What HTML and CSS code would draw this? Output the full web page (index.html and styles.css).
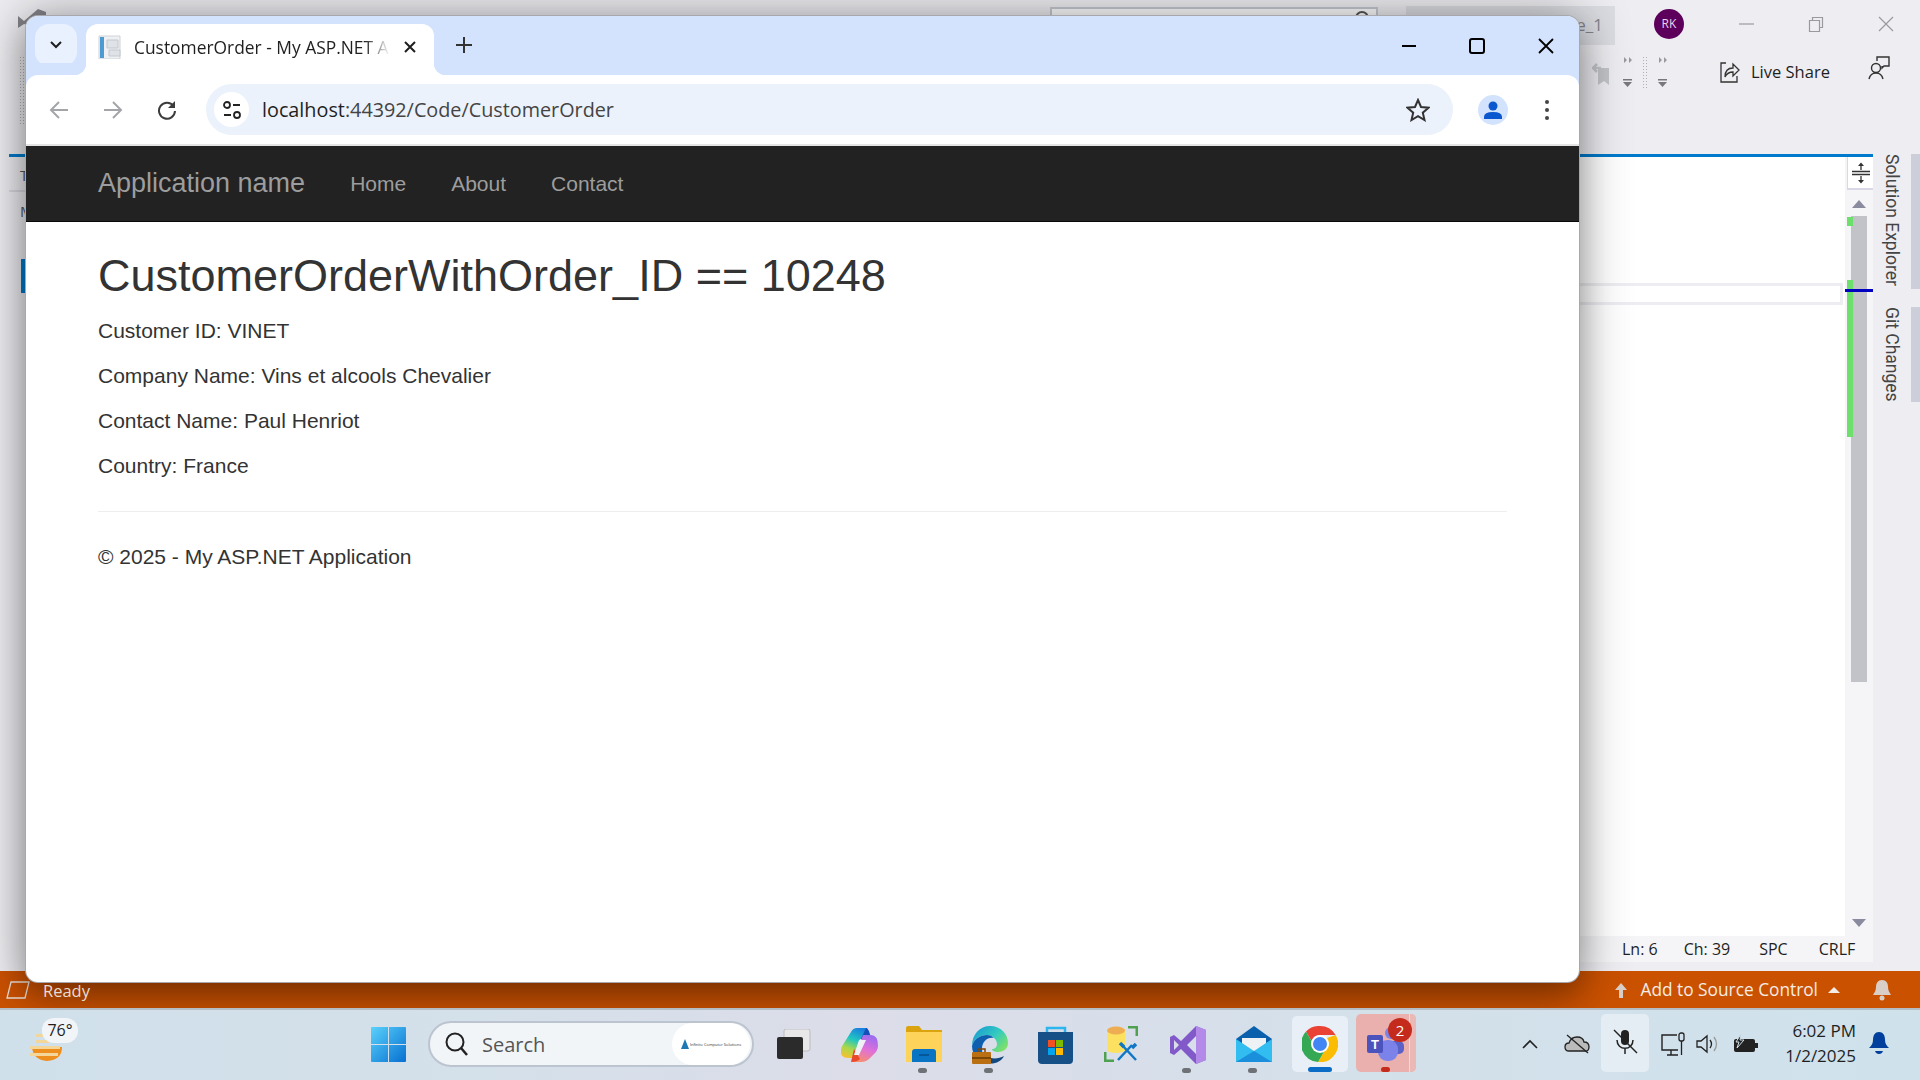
FILE: index.html
```html
<!DOCTYPE html>
<html lang="en">

<head>
    <meta charset="UTF-8">
    <title>CustomerOrder</title>
    <link rel="stylesheet" href="styles.css">
</head>

<body>
    <div class="desktop">
        <!-- visual studio behind the browser -->
        <div class="vs">
            <div class="vs-title">
                <svg class="vs-logo" width="32" height="26" viewBox="0 0 32 26"><path d="M2 8l6 5 14-12 8 3v12l-8 4-14-4-6 4z" fill="#85858a"/></svg>
                <div class="vs-search"><svg width="16" height="16" viewBox="0 0 16 16"><circle cx="8" cy="8" r="6" fill="none" stroke="#555" stroke-width="2"/></svg></div>
                <div class="vs-file">e_1</div>
                <div class="vs-avatar">RK</div>
                <svg class="vs-min" width="16" height="16" viewBox="0 0 16 16"><path d="M0 8h15" stroke="#9a9a9e" stroke-width="1.2"/></svg>
                <svg class="vs-max" width="16" height="16" viewBox="0 0 16 16"><path d="M1.500 4.500h10v11h-10zM4.500 4V1.500h10v10H12" fill="none" stroke="#9a9a9e" stroke-width="1.200"/></svg>
                <svg class="vs-close" width="16" height="16" viewBox="0 0 16 16"><path d="M1 1l14 14M15 1L1 15" stroke="#9a9a9e" stroke-width="1.200"/></svg>
            </div>
            <div class="vs-tools">
                <div class="vs-dots"></div>
                <svg class="vs-bookmark" width="18" height="24" viewBox="0 0 18 24"><path d="M6 6h11v17l-5-4-6 4z" fill="#c4c5c9"/><path d="M9 6H2m3-4L1 6l4 4" fill="none" stroke="#c4c5c9" stroke-width="2.500"/></svg>
                <div class="vs-grip">
                    <svg width="10" height="32" viewBox="0 0 10 32"><path d="M1 1l3 3-3 3zM6 1l3 3-3 3z" fill="#9a9a9e"/><path d="M0 23h9v1.500H0zM0 26h9l-4.500 5z" fill="#77777c"/></svg>
                    <div class="grip-line"></div>
                    <svg width="10" height="32" viewBox="0 0 10 32"><path d="M1 1l3 3-3 3zM6 1l3 3-3 3z" fill="#9a9a9e"/><path d="M0 23h9v1.500H0zM0 26h9l-4.500 5z" fill="#77777c"/></svg>
                </div>
                <svg class="vs-share" width="20" height="22" viewBox="0 0 20 22"><path d="M6 2H1v19h16v-6" fill="none" stroke="#333" stroke-width="1.300"/><path d="M5 16c0-6 3-9 8-9V3l6 6-6 6v-4c-4 0-6 1-8 5z" fill="none" stroke="#333" stroke-width="1.300"/></svg>
                <div class="vs-share-text">Live Share</div>
                <svg class="vs-feedback" width="22" height="24" viewBox="0 0 22 24"><circle cx="8" cy="12" r="4.500" fill="none" stroke="#333" stroke-width="1.400"/><path d="M1 23c1-4 3-6 7-6s6 2 7 6" fill="none" stroke="#333" stroke-width="1.400"/><path d="M9 5V1h12v9h-5l-2 2v-2" fill="none" stroke="#333" stroke-width="1.400"/></svg>
            </div>
            <div class="vs-main">
                <div class="vs-left">
                    <div class="left-blue"></div>
                    <div class="left-t">T</div>
                    <div class="left-line"></div>
                    <div class="left-m">M</div>
                    <div class="left-tab"></div>
                </div>
                <div class="vs-center">
                    <div class="vs-editor">
                        <div class="editor-body"><div class="cur-line"></div></div>
                        <div class="vs-scroll">
                            <div class="split-btn">
                                <svg width="18" height="22" viewBox="0 0 18 22"><path d="M0 9.500h18M0 12.500h18" stroke="#333" stroke-width="1.500"/><path d="M9 8V2M9 14v6" stroke="#333" stroke-width="1.300"/><path d="M6 4l3-3.500L12 4zM6 18l3 3.500 3-3.500z" fill="#333"/></svg>
                            </div>
                            <div class="arrow-up"></div>
                            <div class="scroll-track">
                                <div class="thumb"></div>
                                <div class="mark mark-a"></div>
                                <div class="mark mark-b"></div>
                                <div class="mark-line"></div>
                            </div>
                            <div class="arrow-down"></div>
                        </div>
                    </div>
                    <div class="editor-status">
                        <span class="st-ln">Ln: 6</span>
                        <span class="st-ch">Ch: 39</span>
                        <span class="st-spc">SPC</span>
                        <span class="st-crlf">CRLF</span>
                    </div>
                </div>
                <div class="vs-side">
                    <div class="side-item side-a"><span>Solution Explorer</span></div>
                    <div class="side-item side-b"><span>Git Changes</span></div>
                </div>
            </div>
            <div class="vs-status">
                <svg class="st-icon" width="24" height="18" viewBox="0 0 24 18"><path d="M5 1h18l-4 16H1z" fill="none" stroke="#eadfd6" stroke-width="1.300"/></svg>
                <span class="st-ready">Ready</span>
                <svg class="st-up" width="14" height="16" viewBox="0 0 14 16"><path d="M7 1l6 7H9v8H5V8H1z" fill="#d9cfc8"/></svg>
                <span class="st-add">Add to Source Control</span>
                <div class="st-caret"></div>
                <svg class="st-bell" width="20" height="22" viewBox="0 0 20 22"><path d="M10 1c4 0 6 3 6 7 0 4 2 6 3 8H1c1-2 3-4 3-8 0-4 2-7 6-7z" fill="#d9cfc8"/><circle cx="10" cy="19" r="2.500" fill="#d9cfc8"/></svg>
            </div>
        </div>

        <!-- windows taskbar -->
        <div class="taskbar">
            <div class="weather">
                <svg width="38" height="42" viewBox="0 0 38 42"><path d="M4 20h30q0 13-15 14Q5 33 4 20z" fill="#ee8f1d"/><path d="M8 7h8v3H8zM8 13h14v3H8zM2 19h30v3H2zM2 26h28v3H2z" fill="#f3d79a"/></svg>
                <div class="temp">76°</div>
            </div>
            <svg class="start" width="35" height="35" viewBox="0 0 35 35"><defs><linearGradient id="win" x1="0" y1="0" x2="1" y2="1"><stop offset="0" stop-color="#5bd1fb"/><stop offset="1" stop-color="#0670d1"/></linearGradient></defs><path d="M0 1q0-1 1-1h16v17H0zM18 0h16q1 0 1 1v16H18zM0 18h17v17H1q-1 0-1-1zM18 18h17v16q0 1-1 1H18z" fill="url(#win)"/></svg>
            <div class="search">
                <svg width="24" height="26" viewBox="0 0 24 26"><circle cx="11" cy="11" r="8.500" fill="none" stroke="#222" stroke-width="2"/><path d="M17 17l6 7" stroke="#222" stroke-width="2.500"/></svg>
                <span class="search-text">Search</span>
                <div class="search-logo">
                    <svg width="8" height="10" viewBox="0 0 8 10"><path d="M4 0l4 10H0z" fill="#1e78b4"/></svg>
                    <span>Infinite Computer Solutions</span>
                </div>
            </div>
            <div class="app app-taskview">
                <svg width="36" height="30" viewBox="0 0 36 30"><rect x="7" y="0" width="26" height="22" rx="2" fill="#e8e8e8" stroke="#bbb"/><rect x="0" y="8" width="26" height="22" rx="2" fill="#2b2b2b"/></svg>
            </div>
            <div class="app app-copilot">
                <svg width="38" height="34" viewBox="0 0 38 34"><defs><linearGradient id="copl" x1=".6" y1="0" x2=".2" y2="1"><stop offset="0" stop-color="#1a7fe0"/><stop offset=".4" stop-color="#22c8c0"/><stop offset=".7" stop-color="#a8d84a"/><stop offset="1" stop-color="#f8c030"/></linearGradient><linearGradient id="copr" x1=".7" y1="0" x2=".3" y2="1"><stop offset="0" stop-color="#9a6cf0"/><stop offset=".5" stop-color="#e070d8"/><stop offset="1" stop-color="#f8906a"/></linearGradient></defs><path d="M17 0h10l4 11H20l-7 19H8Q0 30 1 22q0-3 3-7l7-11q2-4 6-4z" fill="url(#copl)"/><path d="M26 0q3 0 5 11H21z" fill="#1550b8"/><path d="M21 34H11q3-1 4-4l8-23 7 0h1q7 0 7 11 0 3-2 6l-7 7q-3 3-8 3z" fill="url(#copr)"/><path d="M11 34l3-13 6 10q-3 3-9 3z" fill="#e8482c"/><path d="M19 12h7l-7 15h-5z" fill="#eef0f6"/></svg>
            </div>
            <div class="app app-folder">
                <svg width="36" height="36" viewBox="0 0 36 36"><path d="M0 2q0-2 2-2h11l3 4h20v32H0z" fill="#dba40f"/><path d="M0 6h36v30H0z" fill="#fdd35a"/><path d="M6 26q0-3 3-3h18q3 0 3 3v10H6z" fill="#0a74c4"/><path d="M13 29h10" stroke="#064e88" stroke-width="1.500"/></svg>
                <i class="dot"></i>
            </div>
            <div class="app app-edge">
                <svg width="36" height="38" viewBox="0 0 36 38"><defs><linearGradient id="edg" x1="0" y1="0" x2="1" y2=".7"><stop offset="0" stop-color="#1593d4"/><stop offset=".6" stop-color="#33cbc0"/><stop offset="1" stop-color="#7ce06a"/></linearGradient></defs><path d="M18 0c11 0 18 8 18 17 0 6-5 9-10 9-3 0-6-1-6-3 3 0 5-2 5-5 0-5-5-9-10-9C8 9 2 13 0 20 0 8 8 0 18 0z" fill="url(#edg)"/><path d="M0 20c2-7 8-11 15-11 3 0 5 1 7 3-7-1-12 4-12 11 0 6 4 12 12 14C10 38 0 31 0 20z" fill="#0e5fb0"/><path d="M14 37c8 2 15-1 18-7-5 3-12 3-17 1z" fill="#14497f"/><rect x="0" y="26" width="19" height="12" rx="1" fill="#b96f12"/><path d="M0 31h19v2H0z" fill="#7b4708"/><path d="M6 26v-3h7v3" fill="none" stroke="#7b4708" stroke-width="1.500"/></svg>
                <i class="dot"></i>
            </div>
            <div class="app app-store">
                <svg width="36" height="38" viewBox="0 0 36 38"><path d="M9 7V2h18v5" fill="none" stroke="#2cb5ef" stroke-width="2.500"/><path d="M0 6h35v28q0 4-4 4H4q-4 0-4-4z" fill="#174f87"/><rect x="10" y="14" width="7" height="7" fill="#f25022"/><rect x="18" y="14" width="7" height="7" fill="#7fba00"/><rect x="10" y="22" width="7" height="7" fill="#00a4ef"/><rect x="18" y="22" width="7" height="7" fill="#ffb900"/></svg>
            </div>
            <div class="app app-sql">
                <svg width="34" height="36" viewBox="0 0 34 36"><path d="M3 3h18v22q-9 4-18 0z" fill="#fbe15f"/><ellipse cx="12" cy="4.500" rx="9" ry="4" fill="#eead53"/><path d="M24 1h9v9M1 26v9h9" fill="none" stroke="#4fa14f" stroke-width="3"/><path d="M14 34l14-15M32 34L18 19" stroke="#1177c4" stroke-width="2.500"/><path d="M16 17l4 4M32 18l-4 4" stroke="#1177c4" stroke-width="3.500"/></svg>
            </div>
            <div class="app app-vstudio">
                <svg width="36" height="38" viewBox="0 0 36 38"><path d="M26 0l10 4v30l-10 4L11 23l-7 6-4-2V11l4-2 7 6zM26 10l-9 9 9 9zM4 14v10l5-5z" fill="#8259c9"/><path d="M26 0l10 4v30l-10 4z" fill="#b48ae8"/></svg>
                <i class="dot"></i>
            </div>
            <div class="app app-mail">
                <svg width="36" height="36" viewBox="0 0 36 36"><path d="M0 13L18 0l18 13v23H0z" fill="#0a60ad"/><path d="M6 12h24v6l-12 8-12-8z" fill="#eef2f5"/><path d="M0 13l18 12 18-12v23H0z" fill="#31bdf0"/><path d="M0 36l18-11 18 11z" fill="#1a8fdc"/></svg>
                <i class="dot"></i>
            </div>
            <div class="app app-chrome">
                <svg width="36" height="36" viewBox="0 0 36 36"><path d="M18 0a18 18 0 0 1 15.600 9H18a9 9 0 0 0-8.500 6L4 5.500A18 18 0 0 1 18 0z" fill="#ea4335"/><path d="M33.600 9A18 18 0 0 1 16 36l7.500-13A9 9 0 0 0 25 12z" fill="#fbbc04"/><path d="M4 5.500l8.500 15A9 9 0 0 0 23.500 23L16 36A18 18 0 0 1 4 5.500z" fill="#34a853"/><circle cx="18" cy="18" r="9" fill="#fff"/><circle cx="18" cy="18" r="7" fill="#4285f4"/></svg>
                <i class="bar"></i>
            </div>
            <div class="app app-teams">
                <svg width="38" height="34" viewBox="0 0 38 34"><circle cx="24" cy="6" r="6" fill="#7b83eb"/><circle cx="33" cy="9" r="4" fill="#5a62c8"/><rect x="22" y="14" width="15" height="13" rx="5" fill="#5a62c8"/><rect x="11" y="13" width="20" height="21" rx="9" fill="#7b83eb"/><rect x="0" y="8" width="16" height="18" rx="2" fill="#4b53bc"/><text x="8" y="22" class="teams-t">T</text></svg>
                <div class="teams-badge">2</div>
                <i class="red"></i>
            </div>
            <div class="tray">
                <svg class="tr-chev" width="16" height="10" viewBox="0 0 16 10"><path d="M1 9l7-7 7 7" fill="none" stroke="#222" stroke-width="1.600"/></svg>
                <svg class="tr-cloud" width="26" height="20" viewBox="0 0 26 20"><path d="M5 17q-4 0-4-4t4-4q2-6 8-6t7 5q5 0 5 5t-5 4z" fill="#bbb" stroke="#222" stroke-width="1.300"/><path d="M3 1l21 18" stroke="#222" stroke-width="1.300"/></svg>
                <div class="tr-mic">
                    <svg width="26" height="26" viewBox="0 0 26 26"><rect x="9" y="1" width="8" height="15" rx="4" fill="#222"/><path d="M5 11c0 11 16 11 16 0M13 19v6" fill="none" stroke="#222" stroke-width="1.500"/><path d="M2 1l23 23" stroke="#222" stroke-width="1.500"/></svg>
                </div>
                <svg class="tr-net" width="24" height="24" viewBox="0 0 24 24"><path d="M16 3H1v15h16M6 23h11M10 18v5" fill="none" stroke="#222" stroke-width="1.400"/><rect x="18" y="1" width="5" height="8" rx="2" fill="none" stroke="#222" stroke-width="1.300"/><path d="M20.500 9v14" stroke="#222" stroke-width="1.300"/></svg>
                <svg class="tr-vol" width="24" height="20" viewBox="0 0 24 20"><path d="M1 7h4l6-5v16l-6-5H1z" fill="none" stroke="#222" stroke-width="1.300"/><path d="M14 6q3 4 0 8" fill="none" stroke="#222" stroke-width="1.300"/><path d="M18 3q5 7 0 14" fill="none" stroke="#999" stroke-width="1.300"/></svg>
                <svg class="tr-bat" width="26" height="20" viewBox="0 0 26 20"><rect x="1" y="5" width="21" height="13" rx="2" fill="#222"/><rect x="22" y="9" width="3" height="5" fill="#222"/><path d="M8 0L3 8h3l-2 6 7-8H7z" fill="#222" stroke="#d0e0ea"/></svg>
                <div class="clock"><span>6:02 PM</span><span>1/2/2025</span></div>
                <svg class="tr-bell" width="20" height="24" viewBox="0 0 20 24"><path d="M10 1c4 0 6 3 6 8 0 4 2 6 4 8H0c2-2 4-4 4-8 0-5 2-8 6-8z" fill="#003f9b"/><path d="M6 20h8q-1 3-4 3t-4-3z" fill="#003f9b"/></svg>
            </div>
        </div>

        <!-- the browser window -->
        <div class="browser">
            <div class="tabstrip">
                <div class="tab-search">
                    <svg width="12" height="8" viewBox="0 0 12 8"><path d="M1 1l5 5 5-5" fill="none" stroke="#1f1f1f" stroke-width="2"/></svg>
                </div>
                <div class="tab">
                    <svg class="favicon" width="24" height="24" viewBox="0 0 24 24"><path d="M1 1h21v23H1z" fill="#eef0f3" stroke="#cfd3d8"/><path d="M2 2h4v21H2z" fill="#4d9bd1"/><path d="M9 5h11v8H9zM11 15h11v6H11z" fill="#dfe3e8" stroke="#c3c8ce"/></svg>
                    <span class="tab-title">CustomerOrder - My ASP.NET A</span>
                    <svg class="tab-close" width="12" height="12" viewBox="0 0 12 12"><path d="M1 1l10 10M11 1L1 11" stroke="#1f1f1f" stroke-width="2"/></svg>
                </div>
                <svg class="tab-new" width="16" height="16" viewBox="0 0 16 16"><path d="M8 0v16M0 8h16" stroke="#333" stroke-width="2"/></svg>
                <svg class="win-min" width="16" height="16" viewBox="0 0 16 16"><path d="M1 8h14" stroke="#000" stroke-width="2"/></svg>
                <svg class="win-max" width="16" height="16" viewBox="0 0 16 16"><rect x="1" y="1" width="14" height="14" rx="2" fill="none" stroke="#000" stroke-width="2"/></svg>
                <svg class="win-close" width="16" height="16" viewBox="0 0 16 16"><path d="M1 1l14 14M15 1L1 15" stroke="#000" stroke-width="1.800"/></svg>
            </div>
            <div class="toolbar">
                <svg class="tb-back" width="20" height="20" viewBox="0 0 20 20"><path d="M19 10H2m8-8l-8 8 8 8" fill="none" stroke="#a3a5a8" stroke-width="2"/></svg>
                <svg class="tb-forward" width="20" height="20" viewBox="0 0 20 20"><path d="M1 10h17m-8-8l8 8-8 8" fill="none" stroke="#a3a5a8" stroke-width="2"/></svg>
                <svg class="tb-reload" width="20" height="20" viewBox="0 0 20 20"><path d="M16.500 6A8 8 0 1 0 18 11" fill="none" stroke="#3c3c3c" stroke-width="2"/><path d="M18 1v7h-7z" fill="#3c3c3c"/></svg>
                <div class="omnibox">
                    <div class="site-icon">
                        <svg width="18" height="20" viewBox="0 0 18 20"><circle cx="4" cy="5" r="3" fill="none" stroke="#222" stroke-width="1.800"/><path d="M10 5h7M1 15h7" stroke="#222" stroke-width="1.800"/><circle cx="14" cy="15" r="3" fill="none" stroke="#222" stroke-width="1.800"/></svg>
                    </div>
                    <span class="url">localhost<span class="url-rest">:44392/Code/CustomerOrder</span></span>
                    <svg class="star" width="24" height="24" viewBox="0 0 24 24"><path d="M12 2l3 7 7.500.7-5.700 5 1.700 7.300-6.500-3.900L5.500 22l1.700-7.300-5.700-5L9 9z" fill="none" stroke="#333" stroke-width="2"/></svg>
                </div>
                <div class="profile">
                    <svg width="20" height="20" viewBox="0 0 20 20"><circle cx="10" cy="6" r="4.500" fill="#0b57d0"/><path d="M1 19v-2q0-5 9-5t9 5v2z" fill="#0b57d0"/></svg>
                </div>
                <div class="kebab"><i></i><i></i><i></i></div>
            </div>
            <div class="page">
                <nav class="navbar">
                    <a class="brand">Application name</a>
                    <a class="nav-link link-home">Home</a>
                    <a class="nav-link link-about">About</a>
                    <a class="nav-link link-contact">Contact</a>
                </nav>
                <div class="container">
                    <h2>CustomerOrderWithOrder_ID == 10248</h2>
                    <p>Customer ID: VINET</p>
                    <p>Company Name: Vins et alcools Chevalier</p>
                    <p>Contact Name: Paul Henriot</p>
                    <p>Country: France</p>
                    <hr>
                    <footer>© 2025 - My ASP.NET Application</footer>
                </div>
            </div>
        </div>
    </div>
</body>

</html>
```

FILE: styles.css
```css
* {
    padding: 0;
    margin: 0;
    box-sizing: border-box;
}

html,
body {
    width: 1920px;
    height: 1080px;
    overflow: hidden;
}

body {
    font-family: "Open Sans", "Liberation Sans", sans-serif;
    color: #1f1f1f;
}

svg {
    display: block;
    flex: none;
}

.desktop {
    position: relative;
    width: 1920px;
    height: 1080px;
    display: flex;
    flex-direction: column;
    overflow: hidden;
}

/* visual studio */
.vs {
    height: 1008px;
    background-color: #eeeef2;
    display: flex;
    flex-direction: column;
}

.vs-title {
    height: 48px;
    display: flex;
    align-items: flex-start;
}

.vs-logo {
    margin: 8px 0 0 16px;
}

.vs-search {
    width: 328px;
    height: 38px;
    margin: 7px 0 0 1002px;
    border: 2px solid #c8cad3;
    background-color: #fff;
    padding: 1px 0 0 302px;
}

.vs-file {
    width: 209px;
    height: 39px;
    margin: 6px 0 0 28px;
    padding: 7px 12px 0 0;
    background-color: #dcdde2;
    color: #85868c;
    font-size: 17px;
    text-align: right;
}

.vs-avatar {
    width: 30px;
    height: 30px;
    margin: 9px 0 0 39px;
    border-radius: 50%;
    background-color: #5c005c;
    color: #e8d4e8;
    font-size: 12px;
    line-height: 30px;
    text-align: center;
}

.vs-min {
    margin: 16px 0 0 55px;
}

.vs-max {
    margin: 16px 0 0 53px;
}

.vs-close {
    margin: 16px 0 0 54px;
}

.vs-tools {
    height: 106px;
    display: flex;
    align-items: flex-start;
    padding-top: 8px;
}

.vs-dots {
    width: 5px;
    height: 70px;
    margin-left: 19px;
    background-image: radial-gradient(#b0b0b5 1px, transparent 1px);
    background-size: 3px 3px;
}

.vs-bookmark {
    margin: 6px 0 0 1568px;
}

.vs-grip {
    display: flex;
    gap: 9px;
    margin-left: 13px;
    height: 32px;
}

.grip-line {
    width: 7px;
    height: 32px;
    background-image: radial-gradient(#b0b0b5 1px, transparent 1px);
    background-size: 3px 3px;
}

.vs-share {
    margin: 5px 0 0 52px;
}

.vs-share-text {
    margin: 3px 0 0 11px;
    font-size: 16.500px;
    line-height: 26px;
    color: #1f1f1f;
}

.vs-feedback {
    margin: 0 0 0 38px;
}

.vs-main {
    flex: 1;
    display: flex;
    min-height: 0;
    padding-bottom: 9px;
}

.vs-left {
    width: 26px;
    flex: none;
}

.left-blue {
    height: 3px;
    margin-left: 9px;
    background-color: #007acc;
}

.left-t,
.left-m {
    padding-left: 20px;
    font-size: 15px;
    color: #555;
    line-height: 20px;
}

.left-t {
    margin-top: 8px;
}

.left-line {
    height: 2px;
    margin: 5px 0 0 9px;
    background-color: #d8d8e0;
}

.left-m {
    margin-top: 9px;
}

.left-tab {
    width: 5px;
    height: 34px;
    margin: 38px 0 0 21px;
    background-color: #007acc;
}

.vs-center {
    flex: 1;
    display: flex;
    flex-direction: column;
}

.vs-editor {
    flex: 1;
    display: flex;
    border-top: 3px solid #007acc;
    min-height: 0;
}

.editor-body {
    flex: 1;
    background-color: #fff;
    padding: 126px 0 0 1553px;
}

.cur-line {
    height: 22px;
    width: 264px;
    border: 3px solid #eeeef2;
    border-left: 0;
}

.editor-status {
    height: 26px;
    flex: none;
    background-color: #f5f5f7;
    display: flex;
    font-size: 16px;
    line-height: 26px;
    color: #1f1f1f;
    white-space: nowrap;
}

.st-ln {
    margin-left: 1596px;
}

.st-ch {
    margin-left: 26px;
}

.st-spc {
    margin-left: 29px;
}

.st-crlf {
    margin-left: 31px;
}

.vs-scroll {
    width: 28px;
    flex: none;
    background-color: #f5f5f7;
    display: flex;
    flex-direction: column;
}

.split-btn {
    height: 33px;
    flex: none;
    margin-left: 2px;
    background-color: #fff;
    border-bottom: 2px solid #d8d8e6;
    border-left: 1px solid #d8d8e6;
    padding: 5px 0 0 4px;
}

.arrow-up {
    width: 0;
    height: 0;
    flex: none;
    margin: 10px 0 0 7px;
    border-left: 7px solid transparent;
    border-right: 7px solid transparent;
    border-bottom: 8px solid #8a8b9e;
}

.scroll-track {
    position: relative;
    flex: 1;
    margin-top: 8px;
}

.thumb {
    width: 16px;
    height: 466px;
    margin-left: 6px;
    background-color: #c2c3c9;
}

.mark {
    position: absolute;
    left: 2px;
    width: 6px;
    background-color: #6cdf6c;
}

.mark-a {
    top: 1px;
    height: 9px;
}

.mark-b {
    top: 64px;
    height: 157px;
}

.mark-line {
    position: absolute;
    left: 0;
    top: 73px;
    width: 28px;
    height: 3px;
    background-color: #0000c0;
}

.arrow-down {
    width: 0;
    height: 0;
    flex: none;
    margin: 0 0 9px 7px;
    border-left: 7px solid transparent;
    border-right: 7px solid transparent;
    border-top: 8px solid #8a8b9e;
}

.vs-side {
    width: 47px;
    flex: none;
    display: flex;
    flex-direction: column;
    gap: 18px;
    align-items: flex-end;
}

.side-item {
    width: 47px;
    border-right: 9px solid #ccced9;
    writing-mode: vertical-rl;
    font-family: Roboto, sans-serif;
    font-size: 17.500px;
    line-height: 38px;
    white-space: nowrap;
    color: #444;
}

.side-a {
    height: 135px;
}

.side-b {
    height: 95px;
}

.vs-status {
    height: 37px;
    flex: none;
    background-color: #ca5100;
    color: #f4ece6;
    display: flex;
    align-items: center;
    font-size: 17.300px;
    padding-right: 28px;
}

.st-icon {
    margin-left: 6px;
}

.st-ready {
    margin-left: 13px;
    font-size: 16.500px;
    color: #e8dcd2;
    position: relative;
    z-index: 3;
    top: 1px;
}

.st-up {
    margin-left: auto;
}

.st-add {
    margin-left: 13px;
}

.st-caret {
    width: 0;
    height: 0;
    margin-left: 10px;
    border-left: 6px solid transparent;
    border-right: 6px solid transparent;
    border-bottom: 6px solid #f4ece6;
}

.st-bell {
    margin-left: 32px;
}

/* taskbar */
.taskbar {
    position: relative;
    z-index: 5;
    flex: 1;
    border-top: 2px solid #b4bcc4;
    background: linear-gradient(90deg, #d0e0ea 0%, #d4e0ea 25%, #dcdde9 45%, #d4e0ea 70%, #cfe2ec 100%);
    display: flex;
    align-items: flex-start;
}

.weather {
    position: relative;
    width: 38px;
    height: 42px;
    margin: 17px 0 0 28px;
}

.temp {
    position: absolute;
    left: 14px;
    top: -9px;
    width: 36px;
    height: 25px;
    border-radius: 12px;
    background-color: #f2f5f7;
    font-size: 16px;
    line-height: 25px;
    text-align: center;
}

.start {
    margin: 17px 0 0 305px;
}

.search {
    width: 326px;
    height: 46px;
    margin: 11px 0 0 22px;
    border: 2px solid #bcc4d0;
    border-radius: 23px;
    background-color: #f2f5f8;
    display: flex;
    align-items: center;
    padding: 0 2px 0 14px;
}

.search-text {
    margin-left: 14px;
    font-size: 20px;
    color: #555;
}

.search-logo {
    width: 78px;
    height: 42px;
    margin-left: auto;
    border-radius: 21px;
    background-color: #fff;
    display: flex;
    align-items: center;
    justify-content: center;
    gap: 1px;
    font-size: 4px;
    white-space: nowrap;
    color: #333;
}

.app {
    position: relative;
    width: 66px;
    height: 68px;
    padding: 16px 0 0 15px;
}

.app-taskview {
    margin-left: 9px;
    width: 62px;
    padding: 19px 0 0 14px;
}

.app-copilot {
    padding: 18px 0 0 15px;
}

.app-chrome {
    width: 56px;
    height: 56px;
    margin: 6px 0 0 0;
    padding: 10px 0 0 10px;
    background-color: #e8eff6;
    border-radius: 5px;
}

.app-mail {
    width: 71px;
}

.app-teams {
    width: 60px;
    height: 58px;
    margin: 4px 0 0 8px;
    padding: 13px 0 0 11px;
    background-color: #e9b0ad;
    border-radius: 5px;
    overflow: visible;
}

.app-teams::after {
    content: "";
    position: absolute;
    right: 0;
    top: 0;
    bottom: 0;
    width: 6px;
    border-left: 1px solid #f2d8d6;
    background-color: #eab8b5;
    border-radius: 0 5px 5px 0;
}

.teams-t {
    fill: #fff;
    font-family: "Liberation Sans", sans-serif;
    font-size: 13px;
    font-weight: bold;
    text-anchor: middle;
}

.teams-badge {
    position: absolute;
    right: 4px;
    top: 4px;
    width: 24px;
    height: 24px;
    border-radius: 50%;
    background-color: #c42b1c;
    color: #fff;
    font-size: 15px;
    line-height: 24px;
    text-align: center;
    z-index: 1;
}

.dot,
.red {
    position: absolute;
    left: 27px;
    top: 58px;
    width: 9px;
    height: 5px;
    border-radius: 3px;
    background-color: #6e7276;
}

.red {
    top: 53px;
    left: 25px;
    background-color: #c42b1c;
}

.bar {
    position: absolute;
    left: 16px;
    bottom: 0;
    width: 24px;
    height: 5px;
    border-radius: 3px;
    background-color: #0a6cc4;
}

.tray {
    flex: 1;
    display: flex;
    align-items: flex-start;
    padding-left: 1px;
}

.tr-chev {
    margin: 29px 0 0 105px;
}

.tr-cloud {
    margin: 24px 0 0 26px;
}

.tr-mic {
    width: 48px;
    height: 58px;
    margin: 4px 0 0 11px;
    padding: 15px 0 0 11px;
    background-color: #e4edf3;
    border-radius: 5px;
}

.tr-net {
    margin: 22px 0 0 12px;
}

.tr-vol {
    margin: 24px 0 0 11px;
}

.tr-bat {
    margin: 24px 0 0 13px;
}

.clock {
    width: 86px;
    margin: 8px 0 0 11px;
    display: flex;
    flex-direction: column;
    align-items: flex-end;
    font-size: 17px;
    line-height: 25px;
    color: #1f1f1f;
}

.tr-bell {
    margin: 21px 0 0 13px;
}

/* browser */
.browser {
    position: absolute;
    left: 26px;
    top: 16px;
    width: 1553px;
    height: 966px;
    border-radius: 12px;
    background-color: #fff;
    box-shadow: 0 0 0 1px #a8a8ac, 0 0 50px 4px rgba(0, 0, 0, .3), 0 14px 30px rgba(0, 0, 0, .25);
    display: flex;
    flex-direction: column;
    overflow: hidden;
    z-index: 2;
}

.tabstrip {
    height: 59px;
    flex: none;
    background-color: #d3e3fd;
    display: flex;
    align-items: flex-start;
    padding: 8px 0 0 9px;
}

.tab-search {
    width: 42px;
    height: 42px;
    flex: none;
    border-radius: 14px;
    background-color: #e9f1fe;
    display: flex;
    align-items: center;
    justify-content: center;
}

.tab {
    position: relative;
    width: 348px;
    height: 51px;
    flex: none;
    margin-left: 9px;
    border-radius: 12px 12px 0 0;
    background-color: #fff;
    display: flex;
    align-items: center;
    padding: 0 0 6px 12px;
}

.tab::before,
.tab::after {
    content: "";
    position: absolute;
    bottom: 0;
    width: 12px;
    height: 12px;
}

.tab::before {
    left: -12px;
    background: radial-gradient(circle at 0 0, transparent 12px, #fff 12.5px);
}

.tab::after {
    right: -12px;
    background: radial-gradient(circle at 100% 0, transparent 12px, #fff 12.5px);
}

.tab-title {
    width: 256px;
    margin-left: 12px;
    font-size: 17.400px;
    white-space: nowrap;
    -webkit-mask-image: linear-gradient(90deg, #000 90%, transparent);
    mask-image: linear-gradient(90deg, #000 90%, transparent);
}

.tab-close {
    margin-left: 14px;
}

.tab-new {
    margin: 13px 0 0 22px;
}

.win-min {
    margin: 14px 0 0 929px;
}

.win-max {
    margin: 14px 0 0 52px;
}

.win-close {
    margin: 14px 0 0 53px;
}

.toolbar {
    height: 71px;
    flex: none;
    background-color: #fff;
    border-bottom: 2px solid #e4e4e4;
    border-radius: 12px 12px 0 0;
    box-shadow: 0 -12px 0 0 #d3e3fd;
    display: flex;
    align-items: center;
}

.tb-back {
    margin-left: 23px;
}

.tb-forward {
    margin-left: 34px;
}

.tb-reload {
    margin-left: 34px;
}

.omnibox {
    width: 1247px;
    height: 51px;
    flex: none;
    margin-left: 29px;
    border-radius: 26px;
    background-color: #ecf2fb;
    display: flex;
    align-items: center;
    padding: 0 23px 0 8px;
}

.site-icon {
    width: 35px;
    height: 35px;
    flex: none;
    border-radius: 50%;
    background-color: #fff;
    display: flex;
    align-items: center;
    justify-content: center;
}

.url {
    margin-left: 13px;
    font-size: 19.800px;
    color: #1f1f1f;
}

.url-rest {
    color: #444;
}

.star {
    margin-left: auto;
}

.profile {
    width: 30px;
    height: 30px;
    flex: none;
    margin-left: 25px;
    border-radius: 50%;
    background-color: #d3e3fd;
    display: flex;
    align-items: center;
    justify-content: center;
}

.kebab {
    margin-left: 37px;
    display: flex;
    flex-direction: column;
    gap: 4px;
}

.kebab i {
    display: block;
    width: 4px;
    height: 4px;
    border-radius: 50%;
    background-color: #444;
}

.page {
    flex: 1;
    font-family: "Liberation Sans", Arial, sans-serif;
    color: #333;
}

.navbar {
    height: 76px;
    background-color: #222;
    border-bottom: 1px solid #080808;
    display: flex;
    align-items: center;
    padding-left: 72px;
    color: #9d9d9d;
}

.brand {
    font-size: 27px;
}

.nav-link {
    font-size: 21px;
}

.link-home {
    margin-left: 45px;
}

.link-about,
.link-contact {
    margin-left: 45px;
}

.container {
    padding: 31px 72px 0;
}

h2 {
    font-size: 45px;
    font-weight: 500;
    line-height: 46px;
    margin-bottom: 17px;
}

p {
    font-size: 21px;
    line-height: 30px;
    margin-bottom: 15px;
}

hr {
    border: 0;
    border-top: 1px solid #eee;
    margin: 30px 0 30px;
}

footer {
    font-size: 21px;
    line-height: 30px;
}
```
